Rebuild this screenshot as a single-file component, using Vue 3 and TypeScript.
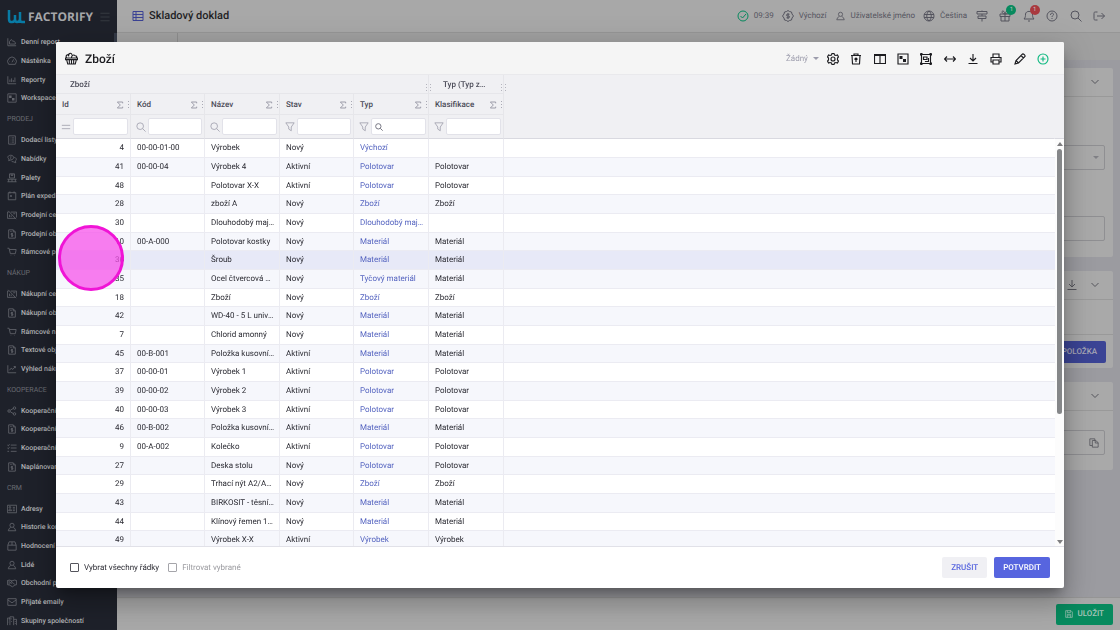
<script setup lang="ts">
import { h, ref, type FunctionalComponent } from 'vue'

const icons: Record<string, string> = {
  chart: 'M2 3v18h20M6 17v-6l4-5 4 4h3l3 4v3z',
  gauge: 'M4 20a10.500 10.500 0 1 1 16 0zM12 15l4-7M5 13h1M18 13h1',
  bars: 'M2 3v18h20M7 17v-6M11 17V8M15 17v-5M19 17V6',
  workspace: 'M2 2h20v20H2z',
  list: 'M4 2h16v20H4zM8 7h1M11 7h6M8 12h1M11 12h6M8 17h1M11 17h6',
  chat: 'M9 3c9 0 9 11 0 11l-5 2 1-4C-1 8 3 3 9 3zM17 8c6 1 7 6 3 9l1 4-5-2c-3 0-5-1-6-3M7 7h4M7 10h3',
  pallet: 'M6 2h12v10H6zM10 2v4h4V2M1 15h22M1 21h22M4 15v6M12 15v6M20 15v6',
  calendar: 'M3 4h18v17H3zM7 1v5M17 1v5M7 12h5M9.500 9.500v5',
  money: 'M4 5H1v15h19M9 5h14v13M3 2l19 20M6 11v6M10 13v4M15 9h5',
  invoice: 'M4 2h11l5 5v15H4zM15 2v5h5M8 6h3M14 11h-4v3h4v3h-4M12 9v10',
  cart: 'M1 3h4l3 13h12l2-10H6M9 20h1M18 20h1',
  trend: 'M2 3v18h20M6 15l4-5 4 3 6-7M16 6h4v4',
  share: 'M8 12a3 3 0 1 1-6 0 3 3 0 0 1 6 0M21 5a3 3 0 1 1-6 0 3 3 0 0 1 6 0M21 19a3 3 0 1 1-6 0 3 3 0 0 1 6 0M8 10l7-4M8 14l7 4',
  tasks: 'M1 5l2 2 3-4M1 12l2 2 3-4M1 20h4M9 5h14M9 12h14M9 20h14',
  card: 'M1 3h22v18H1zM9 8a2 2 0 1 1-4 0 2 2 0 0 1 4 0M4 16c0-5 7-5 7 0zM14 8h5M14 12h5M14 16h5',
  person: 'M17 8a5 5 0 1 1-10 0 5 5 0 0 1 10 0M9 13l-4 3-2 5h18l-2-5-4-3',
  box: 'M2 10l3-8h14l3 8v12H2zM2 10h20M12 2v8',
  handshake: 'M1 6l5-1 6 2 6-2 5 1v10l-4 1-6 4-7-4-5-1zM12 7l-4 5c3 2 5-1 6-1l5 5M5 6v10',
  mail: 'M2 4h20v16H2zM2 7l10 7 10-7',
  buildings: 'M1 22V5h6v17M7 8V2h9v20M16 8h7v14M4 9v1M4 14v1M11 6v2M11 12v2M20 12v2M20 17v2',
  table: 'M2 3h20v18H2zM2 9h20M2 15h20M8 3v18',
  check: 'M22 12a10 10 0 1 1-20 0 10 10 0 0 1 20 0M7 12l4 4 7-8',
  dollar: 'M12 1l3 2 4 1 1 4 3 4-3 4-1 4-4 1-3 2-3-2-4-1-1-4-3-4 3-4 1-4 4-1zM15 8.500h-4c-3 0-3 3.500 0 3.500h2c3 0 3 3.500 0 3.500H9M12 6v12',
  globe: 'M22 12a10 10 0 1 1-20 0 10 10 0 0 1 20 0M2 9h20M2 15h20M12 2c-6 5-6 15 0 20M12 2c6 5 6 15 0 20',
  sign: 'M2 3h20v5H2zM4 12h16v5H4zM12 1v2M12 8v4M12 17v6',
  gift: 'M2 8h20v5H2zM4 13v9h16v-9M12 8v14M12 8C6 8 4 2 8 2c3 0 4 6 4 6s1-6 4-6c4 0 2 6-4 6',
  bell: 'M2 18c3-3 3-6 3-10 1-7 13-7 14 0 0 4 0 7 3 10zM10 22h4',
  help: 'M22 12a10 10 0 1 1-20 0 10 10 0 0 1 20 0M9 10c0-5 6-5 6-1 0 2-3 2-3 5M12 16v2',
  search: 'M18 10a8 8 0 1 1-16 0 8 8 0 0 1 16 0M16 16l7 7',
  logout: 'M9 4H5c-3 0-3 1-3 3v10c0 2 0 3 3 3h4M8 12h15M17 6l6 6-6 6',
  goods: 'M1 11h22v3H1zM3 14l2 8h14l2-8M12 14v8M8 14v8M16 14v8M3 11C0 6 6 3 8 6M7 8C5 3 11 0 13 5M12 10c0-4 4-6 7-3 3 0 3 2 2 4',
  gear: 'M10 1h4l1 3 3 1 3-1 2 4-2 2v4l2 2-2 4-3-1-3 1-1 3h-4l-1-3-3-1-3 1-2-4 2-2v-4L1 8l2-4 3 1 3-1zM16 12a4 4 0 1 1-8 0 4 4 0 0 1 8 0',
  trash: 'M2 5h20M8 5V2h8v3M4 5l1 17h14l1-17M12 18v-8M9 13l3-3 3 3',
  columns: 'M1 3h22v18H1zM12 3v18M1 5h22',
  group: 'M3 3h18v18H3zM1 1v4M1 1h4M23 1v4M23 1h-4M1 23v-4M1 23h4M23 23v-4M23 23h-4M7 8h7v5H7zM16 11h1v6h-6v-1',
  resize: 'M1 12h22M6 7l-5 5 5 5M18 7l5 5-5 5',
  download: 'M12 2v14M6 10l6 6 6-6M3 21h18',
  print: 'M6 9V2h12v7M6 18H2V9h20v9h-4M6 14h12v8H6zM18 12h1',
  pencil: 'M2 22l2-7L17 2c2-1 6 3 5 5L9 20zM14 5l5 5M4 15l5 5',
  plus: 'M22 12a10 10 0 1 1-20 0 10 10 0 0 1 20 0M12 7v10M7 12h10',
  chevron: 'M5 8l7 7 7-7',
  copy: 'M8 6h8l6 5v11H8zM15 6v6h7M8 18H2V2h12v4',
  save: 'M2 2h16l4 4v16H2zM7 2v6h9V2M7 13h10v9M7 13v9M10 17h4',
  filter: 'M2 2h20l-7 10v9l-6-4v-5z',
  equals: 'M2 8h20M2 16h20',
  sigma: 'M20 7V3H4l9 9-9 9h16v-4',
  menu: 'M1 3h22M1 12h22M1 21h22',
}
const solid: Record<string, string> = {
  workspace: 'M5 6h6v6H5zM12 12h6v6h-6z',
  columns: 'M1 2h22v4H1z',
}
const Icon: FunctionalComponent<{ name: string }> = (props) =>
  h('svg', { viewBox: '0 0 24 24', 'aria-hidden': 'true' }, [
    h('path', { d: icons[props.name], fill: 'none', stroke: 'currentColor' }),
    solid[props.name] ? h('path', { d: solid[props.name], fill: 'currentColor', stroke: 'none' }) : null,
  ])
Icon.props = ['name']

const menu: { title?: string; items: [string, string][] }[] = [
  { items: [['chart', 'Denní report'], ['gauge', 'Nástěnka'], ['bars', 'Reporty'], ['workspace', 'Workspace']] },
  { title: 'PRODEJ', items: [['list', 'Dodací listy'], ['chat', 'Nabídky'], ['pallet', 'Palety'], ['calendar', 'Plán expedice'], ['money', 'Prodejní ceny'], ['invoice', 'Prodejní objednávky'], ['cart', 'Rámcové prodeje']] },
  { title: 'NÁKUP', items: [['money', 'Nákupní ceny'], ['invoice', 'Nákupní objednávky'], ['cart', 'Rámcové nákupy'], ['invoice', 'Textové objednávky'], ['trend', 'Výhled nákupu']] },
  { title: 'KOOPERACE', items: [['share', 'Kooperační ceny'], ['invoice', 'Kooperační listy'], ['tasks', 'Kooperační operace'], ['invoice', 'Naplánované']] },
  { title: 'CRM', items: [['card', 'Adresy'], ['person', 'Historie kontaktů'], ['box', 'Hodnocení'], ['person', 'Lidé'], ['handshake', 'Obchodní případy'], ['mail', 'Přijaté emaily'], ['buildings', 'Skupiny společností']] },
]

const actions: [string, string, number?][] = [
  ['sign', 'Průvodce'], ['gift', 'Novinky', 1], ['bell', 'Upozornění', 1], ['help', 'Nápověda'], ['search', 'Hledat'], ['logout', 'Odhlásit'],
]
const tools: [string, string][] = [
  ['gear', 'Nastavení'], ['trash', 'Obnovit'], ['columns', 'Sloupce'], ['workspace', 'Workspace'], ['group', 'Seskupit'],
  ['resize', 'Šířka'], ['download', 'Stáhnout'], ['print', 'Tisk'], ['pencil', 'Upravit'], ['plus', 'Přidat'],
]
const columns: [string, string][] = [
  ['Id', 'equals'], ['Kód', 'search'], ['Název', 'search'], ['Stav', 'filter'], ['Typ', 'filter'], ['Klasifikace', 'filter'],
]
const rows: string[][] = [
  ['4', '00-00-01-00', 'Výrobek', 'Nový', 'Výchozí', ''],
  ['41', '00-00-04', 'Výrobek 4', 'Aktivní', 'Polotovar', 'Polotovar'],
  ['48', '', 'Polotovar X-X', 'Aktivní', 'Polotovar', 'Polotovar'],
  ['28', '', 'zboží A', 'Nový', 'Zboží', 'Zboží'],
  ['30', '', 'Dlouhodobý majetek', 'Nový', 'Dlouhodobý majetek', ''],
  ['10', '00-A-000', 'Polotovar kostky', 'Nový', 'Materiál', 'Materiál'],
  ['36', '', 'Šroub', 'Nový', 'Materiál', 'Materiál'],
  ['35', '', 'Ocel čtvercová ČSN', 'Nový', 'Tyčový materiál', 'Materiál'],
  ['18', '', 'Zboží', 'Nový', 'Zboží', 'Zboží'],
  ['42', '', 'WD-40 - 5 L univerzální', 'Nový', 'Materiál', 'Materiál'],
  ['7', '', 'Chlorid amonný', 'Nový', 'Materiál', 'Materiál'],
  ['45', '00-B-001', 'Položka kusovníku', 'Aktivní', 'Materiál', 'Materiál'],
  ['37', '00-00-01', 'Výrobek 1', 'Aktivní', 'Polotovar', 'Polotovar'],
  ['39', '00-00-02', 'Výrobek 2', 'Aktivní', 'Polotovar', 'Polotovar'],
  ['40', '00-00-03', 'Výrobek 3', 'Aktivní', 'Polotovar', 'Polotovar'],
  ['46', '00-B-002', 'Položka kusovníku', 'Aktivní', 'Materiál', 'Materiál'],
  ['9', '00-A-002', 'Kolečko', 'Aktivní', 'Polotovar', 'Polotovar'],
  ['27', '', 'Deska stolu', 'Nový', 'Polotovar', 'Polotovar'],
  ['29', '', 'Trhací nýt A2/A2 4x10', 'Nový', 'Zboží', 'Zboží'],
  ['43', '', 'BIRKOSIT - těsnící tmel', 'Nový', 'Materiál', 'Materiál'],
  ['44', '', 'Klínový řemen 13x1000', 'Nový', 'Materiál', 'Materiál'],
  ['49', '', 'Výrobek X-X', 'Aktivní', 'Výrobek', 'Výrobek'],
]
const selectAll = ref(false)
const filterSelected = ref(false)
</script>

<template>
  <div class="app">
    <aside class="sidebar">
      <div class="brand">
        <svg class="mark" viewBox="0 0 18 14" aria-hidden="true">
          <path d="M2 0v9q0 3 2 3h1q3 0 3-3V5v4q0 3 2 3q3 0 3-3V2v8q0 2 2 2h3" fill="none" stroke="currentColor" stroke-width="2.5" />
        </svg>
        <span class="name">FACTORIFY</span>
        <button class="burger" aria-label="Menu"><Icon name="menu" class="icon burger-icon" /></button>
      </div>
      <nav class="nav">
        <template v-for="(section, s) in menu" :key="s">
          <h2 v-if="section.title" class="nav-title">{{ section.title }}</h2>
          <a v-for="item in section.items" :key="item[1]" href="#" class="nav-item">
            <Icon :name="item[0]" class="icon nav-icon" /><span>{{ item[1] }}</span>
          </a>
        </template>
      </nav>
    </aside>

    <div class="main">
      <header class="topbar">
        <Icon name="table" class="icon title-icon" />
        <h1 class="title">Skladový doklad</h1>
        <div class="status">
          <span class="entry"><Icon name="check" class="icon ok" />09:39</span>
          <span class="entry"><Icon name="dollar" class="icon" />Výchozí</span>
          <span class="entry"><Icon name="person" class="icon user" />Uživatelské jméno</span>
          <span class="entry"><Icon name="globe" class="icon" />Čeština</span>
        </div>
        <div class="actions">
          <button v-for="a in actions" :key="a[0]" :class="['tool', a[0]]" :aria-label="a[1]">
            <Icon :name="a[0]" class="icon" /><span v-if="a[2]" class="badge">{{ a[2] }}</span>
          </button>
        </div>
      </header>
      <div class="tabs"><span class="tab"></span></div>
      <main class="content">
        <section class="card">
          <div class="card-head"><Icon name="chevron" class="icon" /></div>
          <div class="card-form">
            <div class="field"><i class="caret"></i></div>
            <div class="field"></div>
          </div>
        </section>
        <section class="card">
          <div class="card-head"><Icon name="download" class="icon" /><Icon name="chevron" class="icon" /></div>
          <div class="card-space"></div>
          <div class="card-actions"><button class="btn primary dim">+ POLOŽKA</button></div>
        </section>
        <section class="card">
          <div class="card-head"><Icon name="chevron" class="icon" /></div>
          <div class="card-note"><div class="field"><Icon name="copy" class="icon copy" /></div></div>
        </section>
      </main>
      <footer class="savebar">
        <button class="btn save"><Icon name="save" class="icon save-icon" />ULOŽIT</button>
      </footer>
    </div>

    <div class="overlay">
      <div class="dialog" role="dialog" aria-labelledby="dialog-title">
        <header class="dialog-head">
          <Icon name="goods" class="icon goods" />
          <h2 id="dialog-title" class="title">Zboží</h2>
          <label class="preset">
            <select aria-label="Pohled"><option>Žádný</option></select><i class="caret"></i>
          </label>
          <div class="tools">
            <button v-for="t in tools" :key="t[0]" :class="['tool', t[0]]" :aria-label="t[1]"><Icon :name="t[0]" class="icon" /></button>
          </div>
        </header>

        <div class="grid">
          <div class="table-wrap">
            <table>
              <colgroup>
                <col class="wide" /><col class="narrow" /><col class="wide" /><col class="narrow" /><col class="wide" /><col class="wide" /><col />
              </colgroup>
              <thead>
                <tr class="groups">
                  <th colspan="5"><span class="clip">Zboží</span><i class="grip"></i></th>
                  <th><span class="clip">Typ (Typ zboží)</span><i class="grip"></i></th>
                  <th class="rest"></th>
                </tr>
                <tr class="labels">
                  <th v-for="c in columns" :key="c[0]">
                    <div class="label"><span>{{ c[0] }}</span><Icon name="sigma" class="icon sigma" /><i class="dots"></i></div>
                  </th>
                  <th class="rest"></th>
                </tr>
                <tr class="filters">
                  <th v-for="c in columns" :key="c[0]">
                    <div class="filter">
                      <Icon :name="c[1]" class="icon filter-icon" />
                      <span class="box"><Icon v-if="c[0] === 'Typ'" name="search" class="icon mini" /><input type="text" :aria-label="'Filtr ' + c[0]" /></span>
                    </div>
                  </th>
                  <th class="rest"></th>
                </tr>
              </thead>
              <tbody>
                <tr v-for="row in rows" :key="row[0]" :class="{ active: row[0] === '36' }">
                  <td class="num">{{ row[0] }}</td>
                  <td>{{ row[1] }}</td>
                  <td>{{ row[2] }}</td>
                  <td>{{ row[3] }}</td>
                  <td class="link"><a href="#">{{ row[4] }}</a></td>
                  <td>{{ row[5] }}</td>
                  <td class="rest"></td>
                </tr>
              </tbody>
            </table>
          </div>
          <div class="scroll">
            <div class="scroll-head"></div>
            <i class="arrow up"></i>
            <div class="track"><div class="thumb"></div></div>
            <i class="arrow down"></i>
          </div>
        </div>

        <footer class="dialog-foot">
          <label class="check"><input v-model="selectAll" type="checkbox" />Vybrat všechny řádky</label>
          <label class="check off"><input v-model="filterSelected" type="checkbox" disabled />Filtrovat vybrané</label>
          <span class="spring"></span>
          <button class="btn flat">ZRUŠIT</button>
          <button class="btn primary">POTVRDIT</button>
        </footer>
      </div>
    </div>
    <div class="pointer"></div>
  </div>
</template>

<style>
body {
  margin: 0;
}
</style>

<style scoped>
* {
  box-sizing: border-box;
}
.app {
  display: flex;
  height: 100vh;
  overflow: hidden;
  font-family: Roboto, 'Liberation Sans', sans-serif;
  font-size: 8px;
  line-height: 12px;
  text-rendering: geometricPrecision;
  color: #2b2b33;
  background: #9b9ba0;
}
h1, h2 {
  margin: 0;
}
a {
  text-decoration: none;
}
button {
  font: inherit;
  border: 0;
  padding: 0;
  background: none;
  color: inherit;
  text-rendering: inherit;
}
.icon {
  display: block;
  flex: none;
  width: 12px;
  height: 12px;
  stroke-width: 2;
}
.title {
  font-size: 11px;
  line-height: 16px;
  font-weight: 500;
}

/* Sidebar */
.sidebar {
  display: flex;
  flex-direction: column;
  width: 117px;
  flex: none;
  background: #1e212a;
  color: #a6a7aa;
  overflow: hidden;
}
.brand {
  display: flex;
  align-items: center;
  height: 33px;
  flex: none;
  padding: 0 7px;
}
.mark {
  width: 18px;
  height: 14px;
  color: #087ba5;
  flex: none;
}
.name {
  margin-left: 3px;
  font-family: 'Open Sans', 'Noto Sans', sans-serif;
  font-size: 12px;
  font-weight: 700;
}
.burger {
  margin-left: auto;
  color: #3b3e46;
}
.burger-icon {
  width: 10px;
  height: 10px;
}
.nav {
  flex: 1;
  display: flex;
  flex-direction: column;
  background: linear-gradient(#333946, #333946) right top / 3px 90% no-repeat;
}
.nav-title,
.nav-item {
  display: flex;
  align-items: center;
  padding-left: 7px;
  font-size: 7px;
  white-space: nowrap;
  min-height: 0;
}
.nav-title {
  flex: 5 1 0;
  font-weight: 400;
  color: #6a6c73;
}
.nav-item {
  flex: 4 1 0;
  gap: 4px;
  color: #b0b1b4;
  font-weight: 500;
}
.nav-icon {
  width: 10px;
  height: 10px;
  color: #63656c;
}

/* Page */
.main {
  flex: 1;
  display: flex;
  flex-direction: column;
  min-width: 0;
}
.topbar {
  display: flex;
  align-items: center;
  height: 33px;
  flex: none;
  padding: 0 15px;
  background: #a8a8a8;
  border-bottom: 1px solid #969696;
  color: #55555f;
}
.topbar .title {
  margin-left: 5px;
  color: #1f1f24;
}
.title-icon {
  color: #3b4294;
}
.status {
  display: flex;
  gap: 8px;
  margin-left: auto;
}
.entry {
  display: flex;
  align-items: center;
  gap: 5px;
}
.ok {
  color: #078a5e;
}
.user {
  width: 11px;
  height: 10px;
}
.actions {
  display: flex;
  justify-content: space-between;
  width: 129px;
  margin-left: 9px;
}
.tool {
  position: relative;
}
.badge {
  position: absolute;
  left: 7px;
  top: -5px;
  width: 10px;
  height: 10px;
  border-radius: 5px;
  background: #078a5e;
  color: #c4c4c4;
  font-size: 6px;
  line-height: 10px;
  text-align: center;
}
.bell .badge {
  background: #a9393f;
}
.tabs {
  height: 27px;
  flex: none;
  display: flex;
  background: #a0a0a0;
}
.tab {
  width: 61px;
  border-right: 1px solid #8d8d8d;
}
.content {
  flex: 1;
  display: flex;
  flex-direction: column;
  gap: 14px;
  padding: 8px 7px;
}
.card {
  background: #a9a9a9;
  border-radius: 2px;
}
.card-head {
  display: flex;
  align-items: center;
  justify-content: flex-end;
  gap: 11px;
  height: 29px;
  padding: 0 12px;
  border-bottom: 1px solid #999;
  color: #55555c;
}
.card-form {
  display: flex;
  flex-direction: column;
  gap: 46px;
  padding: 48px 8px 16px;
}
.field {
  display: flex;
  align-items: center;
  justify-content: flex-end;
  height: 25px;
  padding: 0 5px;
  border: 1px solid #8f8f92;
  border-radius: 2px;
  color: #55555c;
}
.card-space {
  height: 35px;
  border-bottom: 1px solid #999;
}
.card-actions {
  display: flex;
  justify-content: flex-end;
  padding: 6px 7px 5px;
}
.card-note {
  padding: 19px 8px 15px;
}
.copy {
  width: 10px;
  height: 10px;
}
.caret {
  border: 3px solid transparent;
  border-top-color: currentColor;
  border-bottom: 0;
}
.field .caret {
  color: #808085;
}
.savebar {
  display: flex;
  align-items: center;
  justify-content: flex-end;
  height: 33px;
  flex: none;
  padding: 0 7px;
  background: #a8a8a8;
  border-top: 1px solid #959595;
}
.btn {
  display: flex;
  align-items: center;
  height: 21px;
  padding: 0 9px;
  border-radius: 2px;
  font-weight: 500;
}
.primary {
  background: #5765df;
  color: #fff;
}
.dim {
  height: 22px;
  background: #3b4495;
  color: #a9a9b5;
}
.save {
  gap: 4px;
  background: #078a5e;
  color: #a9c5ba;
}
.save-icon {
  width: 8px;
  height: 8px;
}

/* Dialog */
.overlay {
  position: fixed;
  inset: 0;
  display: flex;
  padding: 42px 56px;
}
.dialog {
  flex: 1;
  display: flex;
  flex-direction: column;
  min-width: 0;
  overflow: hidden;
  background: #fff;
  border-radius: 2px;
  box-shadow: 0 7px 10px -4px rgba(0, 0, 0, 0.3), 0 16px 25px 2px rgba(0, 0, 0, 0.16), 0 6px 30px 5px rgba(0, 0, 0, 0.13);
}
.dialog-head {
  display: flex;
  align-items: center;
  height: 33px;
  flex: none;
  padding: 1px 15px 0 9px;
  background: #f5f5f5;
  border-bottom: 1px solid #e9e9ec;
  color: #1c1c20;
}
.tools .icon {
  stroke-width: 2.3;
}
.goods {
  width: 13px;
  height: 13px;
}
.dialog-head .title {
  margin-left: 7px;
  font-size: 12px;
}
.preset {
  display: flex;
  align-items: center;
  gap: 5px;
  margin-left: auto;
  margin-right: 8px;
  color: #9c9cac;
}
.preset select {
  appearance: none;
  border: 0;
  padding: 0;
  background: none;
  font: inherit;
  color: inherit;
  text-rendering: inherit;
}
.tools {
  display: flex;
  justify-content: space-between;
  width: 222px;
}
.tools .plus {
  color: #10b981;
}
.grid {
  flex: 1;
  display: flex;
  min-height: 0;
  border-bottom: 1px solid #e1e1e8;
}
.table-wrap {
  flex: 1;
  min-width: 0;
  overflow: hidden;
}
table {
  width: 100%;
  table-layout: fixed;
  border-collapse: separate;
  border-spacing: 0;
}
.wide {
  width: 75px;
}
.narrow {
  width: 74px;
}
th {
  position: relative;
  padding: 0;
  background: #f0f0f3;
  border-right: 1px solid #e6e6ea;
  border-bottom: 1px solid #e6e6ea;
  text-align: left;
  font-weight: 500;
  color: #4a4a57;
}
thead .rest {
  border-color: #f0f0f3;
}
.groups th {
  height: 19px;
  padding: 1px 14px 0;
}
.clip {
  display: block;
  overflow: hidden;
  text-overflow: ellipsis;
  white-space: nowrap;
}
.grip {
  position: absolute;
  z-index: 1;
  right: -3px;
  bottom: 2px;
  width: 5px;
  height: 7px;
  background: conic-gradient(#b4b4bd 0 0) 0 0 / 1px 100% no-repeat, conic-gradient(#b4b4bd 0 0) 100% 0 / 1px 100% no-repeat;
  mask: repeating-linear-gradient(#000 0 1px, transparent 1px 3px);
}
.labels th {
  height: 21px;
  padding-top: 1px;
}
.label {
  display: flex;
  align-items: center;
  padding-left: 6px;
}
.sigma {
  width: 8px;
  height: 8px;
  margin-left: auto;
  stroke-width: 3;
  color: #9c9ca9;
}
.dots {
  width: 1px;
  height: 7px;
  margin: 0 1px 0 4px;
  background: repeating-linear-gradient(#a9a9b4 0 1px, transparent 1px 3px);
}
.filters th {
  height: 24px;
  border-bottom-color: #d9d9e0;
}
.filter {
  display: flex;
  align-items: center;
  gap: 2px;
  padding: 0 2px 0 5px;
}
.filter-icon {
  width: 10px;
  height: 10px;
  color: #a0a0ad;
}
.box {
  flex: 1;
  display: flex;
  align-items: center;
  min-width: 0;
  height: 17px;
  background: #fff;
  border: 1px solid #e2e2e9;
  border-radius: 2px;
}
.mini {
  width: 8px;
  height: 8px;
  margin-left: 3px;
  stroke-width: 3;
  color: #777783;
}
.box input {
  flex: 1;
  min-width: 0;
  height: 14px;
  padding: 0 3px;
  border: 0;
  background: none;
  font: inherit;
  outline: 0;
}
td {
  height: 19px;
  padding: 0 4px 0 6px;
  border-right: 1px solid #ebebf1;
  border-bottom: 1px solid #ebebf2;
  overflow: hidden;
  text-overflow: ellipsis;
  white-space: nowrap;
}
tbody tr:nth-child(3n) td {
  height: 18px;
}
tbody tr:nth-child(even) td {
  background: #f6f7fc;
}
tbody tr.active td {
  background: #e7e9f7;
}
tbody .rest {
  border-right: 0;
}
td.num {
  padding-right: 6px;
  text-align: right;
}
.link,
.link a {
  color: #5564c0;
}
.scroll {
  width: 9px;
  flex: none;
  display: flex;
  flex-direction: column;
  align-items: center;
  background: #fcfcfc;
}
.scroll-head {
  width: 100%;
  height: 64px;
  background: #f0f0f3;
  border-bottom: 1px solid #d9d9e0;
}
.arrow {
  border: 3px solid transparent;
}
.up {
  margin: 3px 0;
  border-top: 0;
  border-bottom: 4px solid #7e7e80;
}
.down {
  margin: 2px 0;
  border-bottom: 0;
  border-top: 4px solid #7e7e80;
}
.track {
  flex: 1;
  width: 5px;
}
.thumb {
  height: 68%;
  border-radius: 3px;
  background: #858789;
}
.dialog-foot {
  display: flex;
  align-items: center;
  height: 41px;
  flex: none;
  padding: 0 14px;
}
.check {
  display: flex;
  align-items: center;
  gap: 5px;
}
.check input {
  appearance: none;
  width: 9px;
  height: 9px;
  margin: 0;
  border: 1px solid #55555c;
  border-radius: 1px;
}
.off {
  margin-left: 9px;
  color: #9b9ba0;
}
.off input {
  border-color: #a5a5aa;
}
.spring {
  flex: 1;
}
.flat {
  margin-right: 7px;
  background: #f0f0f4;
  color: #5765df;
}
.pointer {
  position: fixed;
  left: 58px;
  top: 225px;
  width: 66px;
  height: 66px;
  border: 3px solid #f014d6;
  border-radius: 50%;
  background: rgba(247, 80, 235, 0.73);
}
</style>
